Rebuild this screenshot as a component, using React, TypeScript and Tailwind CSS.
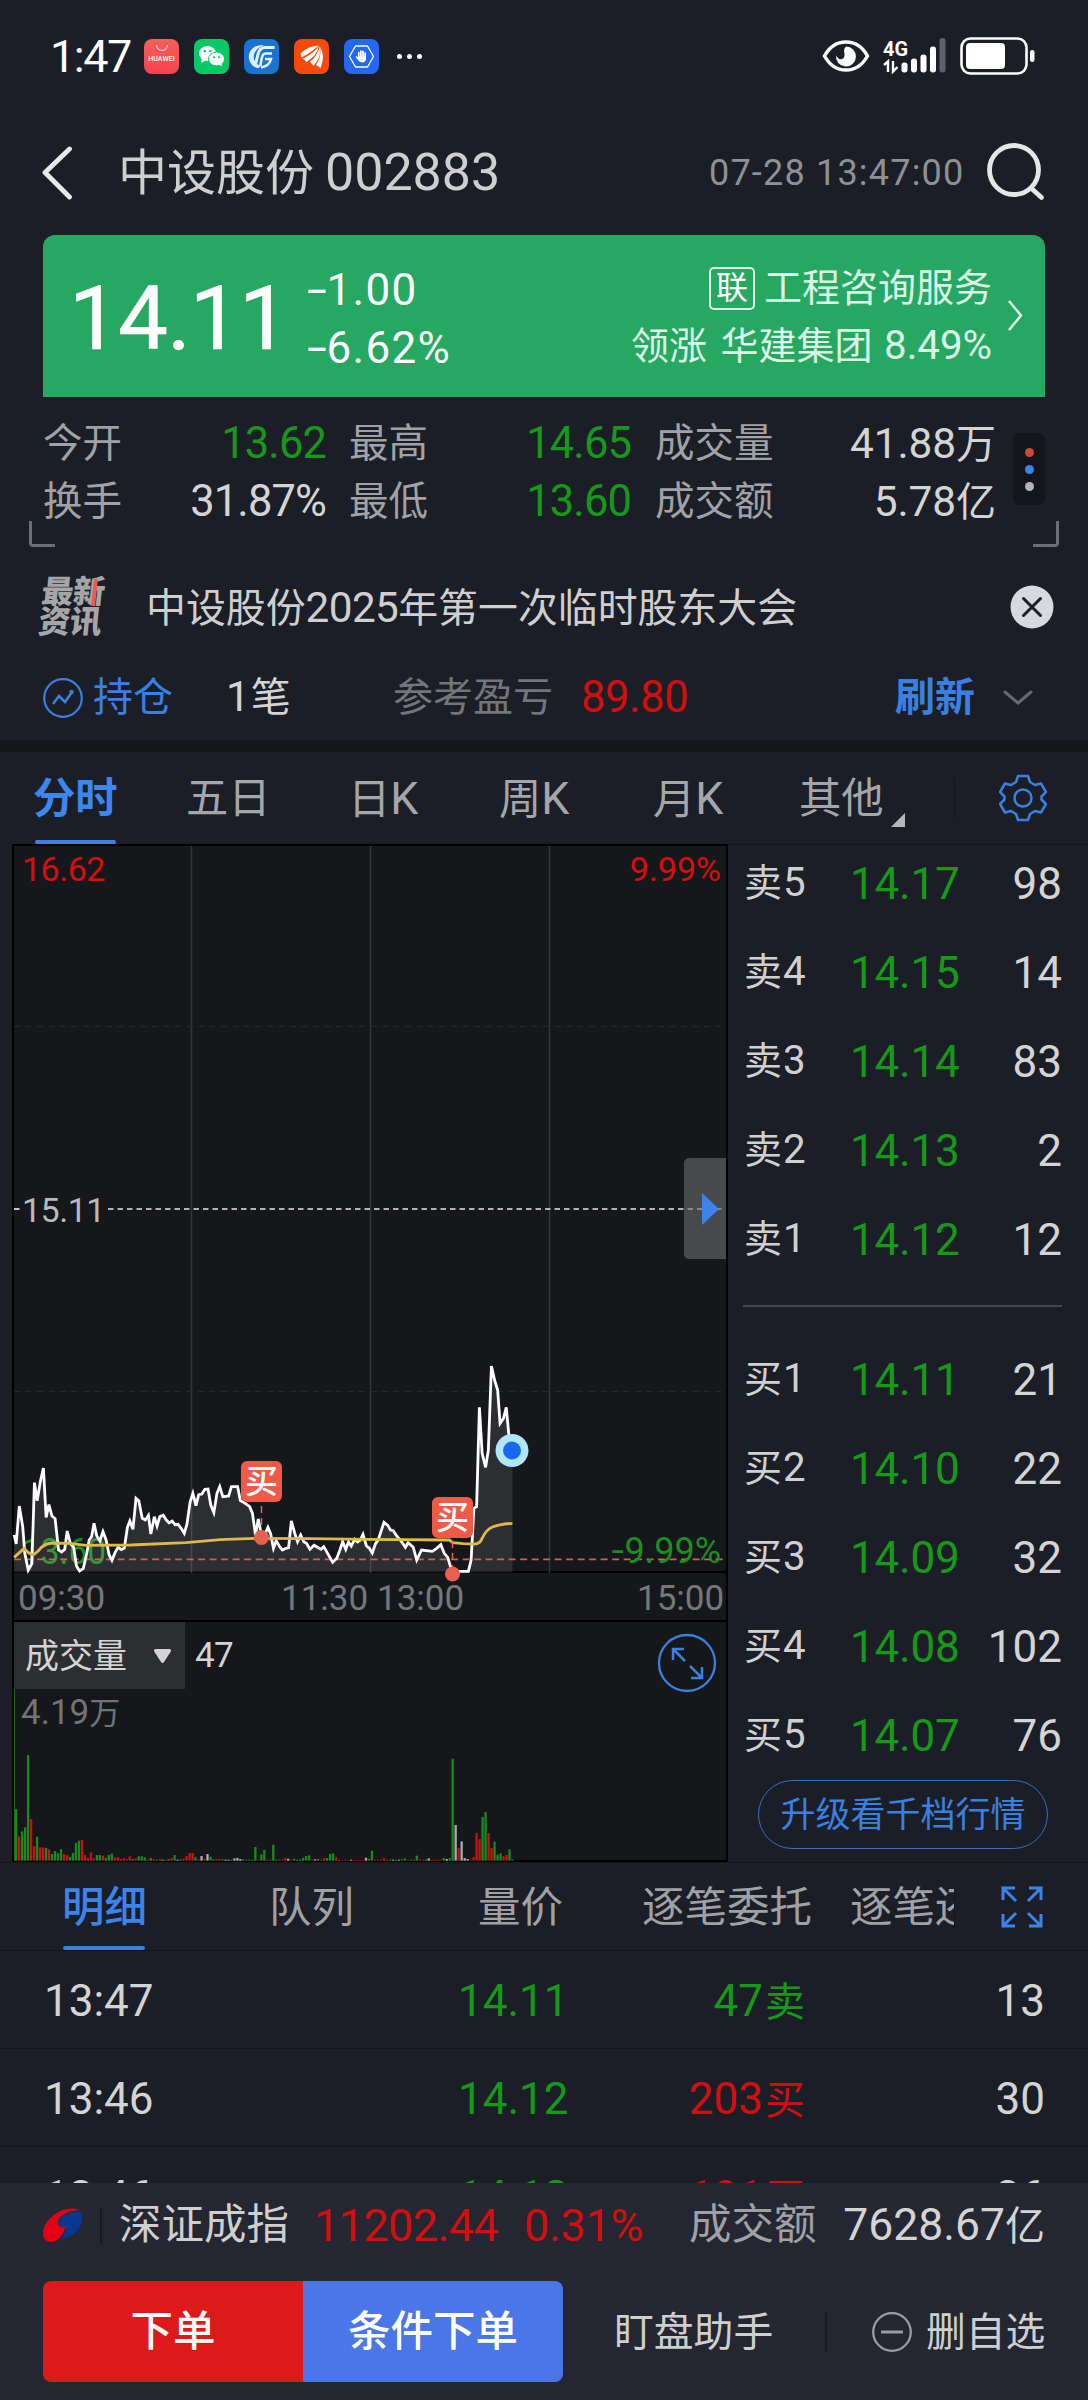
import React from 'react';

const N = ({ children, className = '' }: { children: React.ReactNode; className?: string }) => (
  <span className={`text-[1.06em] ${className}`}>{children}</span>
);

const pricePoints =
  '41,585 47,612 56,498 66,560 72,640 82,690 92,672 96,560 100,428 108,482 117,425 126,384 134,532 142,494 151,528 160,536 170,630 179,636 188,628 195,573 205,612 214,622 222,678 231,693 242,685 252,640 259,600 266,590 273,550 281,588 290,603 299,575 308,600 317,645 325,661 334,638 343,622 352,629 361,624 370,562 377,543 386,568 395,475 403,482 413,535 422,540 431,526 438,582 448,530 456,558 464,530 474,526 483,540 491,548 500,543 508,554 517,553 526,565 535,580 543,552 552,486 560,460 569,497 577,464 586,462 595,448 604,447 612,495 621,518 630,460 638,440 647,470 656,469 664,468 672,440 690,440 698,482 712,490 725,500 733,520 742,585 750,537 760,590 768,585 778,562 786,582 794,625 802,602 812,620 820,630 830,625 838,623 846,543 856,580 864,605 873,585 882,605 890,610 900,628 912,616 922,622 932,628 940,620 950,638 966,667 978,655 987,630 995,605 1004,628 1012,606 1020,618 1030,598 1038,606 1046,600 1054,583 1064,618 1072,624 1081,639 1090,612 1098,600 1115,547 1126,556 1134,570 1142,572 1152,588 1168,608 1177,622 1185,608 1200,622 1210,660 1224,630 1255,634 1268,625 1280,614 1290,640 1300,652 1308,680 1318,694 1360,694 1368,660 1376,505 1384,500 1392,202 1400,340 1410,382 1418,330 1427,78 1436,120 1445,150 1452,250 1462,235 1470,202 1478,290 1488,332';

const averagePath =
  'M41,652 L70,625 Q82,640 94,645 Q106,640 120,622 Q134,610 150,609 L200,610 L250,616 L380,615 L540,608 L640,599 L740,595 L900,596 L1060,598 L1305,600 L1315,608 L1345,611 L1378,612 Q1394,612 1400,595 Q1412,568 1430,561 Q1450,553 1488,550';

// index, colour, height
const bars: [number, string, number][] = [
  [0,'g',155],[1,'r',73],[2,'g',88],[3,'g',100],[4,'g',317],[5,'r',125],[6,'r',44],[7,'g',72],[8,'r',40],[9,'r',40],[10,'g',38],[11,'r',34],[12,'g',20],[13,'g',29],[14,'g',22],[15,'g',35],[16,'r',20],[17,'r',17],[18,'g',11],[19,'g',23],[20,'g',53],[21,'g',60],[22,'r',62],[23,'r',17],[24,'r',9],[25,'r',25],[26,'r',7],[27,'g',17],[28,'g',17],[29,'r',15],[30,'g',8],[31,'g',17],[32,'g',21],[33,'r',10],[34,'r',10],[35,'r',5],[36,'r',8],[37,'r',4],[38,'r',13],[39,'g',5],[40,'r',7],[41,'g',13],[42,'g',13],[43,'g',10],[44,'r',4],[45,'g',8],[46,'r',5],[47,'g',3],[48,'r',5],[49,'w',3],[50,'g',3],[51,'g',5],[52,'r',8],[53,'g',17],[54,'w',3],[55,'g',4],[56,'r',7],[57,'r',14],[58,'r',23],[59,'r',23],[60,'g',10],[61,'r',4],[62,'w',14],[63,'r',6],[64,'w',20],[65,'g',12],[66,'g',4],[67,'r',5],[68,'r',6],[69,'g',4],[70,'w',3],[71,'w',3],[72,'g',3],[73,'w',7],[74,'w',8],[75,'w',5],[76,'g',4],[77,'g',3],[78,'g',3],[79,'g',3],[80,'g',41],[81,'r',3],[82,'g',19],[83,'g',32],[84,'r',3],[85,'g',3],[86,'g',48],[87,'g',3],[88,'g',3],[89,'r',4],[90,'r',8],[91,'w',6],[92,'r',3],[93,'g',6],[94,'g',3],[95,'g',4],[96,'g',9],[97,'g',14],[98,'g',16],[99,'r',3],[100,'w',4],[101,'g',5],[102,'r',3],[103,'r',8],[104,'g',8],[105,'g',20],[106,'g',22],[107,'r',11],[108,'r',3],[109,'r',2],[110,'r',3],[111,'r',2],[112,'w',3],[113,'r',2],[114,'r',3],[115,'r',2],[116,'r',2],[117,'w',9],[118,'g',6],[119,'g',30],[120,'r',3],[121,'r',3],[122,'r',4],[123,'r',8],[124,'r',3],[125,'g',3],[126,'w',3],[127,'g',3],[128,'w',3],[129,'g',4],[130,'g',7],[131,'r',3],[132,'g',3],[133,'g',3],[134,'g',15],[135,'r',4],[136,'r',3],[137,'g',4],[138,'w',7],[139,'r',3],[140,'r',3],[141,'r',3],[142,'r',3],[143,'g',8],[144,'w',5],[145,'g',8],[146,'g',306],[147,'w',107],[148,'r',38],[149,'w',58],[150,'w',8],[151,'w',5],[152,'r',3],[153,'r',11],[154,'r',83],[155,'r',65],[156,'g',131],[157,'g',146],[158,'r',83],[159,'r',38],[160,'g',57],[161,'g',18],[162,'g',22],[163,'r',13],[164,'r',17],[165,'g',34],[166,'g',3],
];
const barFill: Record<string, string> = { g: '#1a8a1e', r: '#c41414', w: '#a9abad' };

function StatusBar() {
  return (
    <div className="flex h-[112px] items-center text-white">
      <div className="w-[144px] shrink-0 pl-[50px] text-[45px] leading-none tracking-[-1.5px] whitespace-nowrap">1:47</div>
      <div className="flex gap-[15px]">
        <div className="flex h-[35px] w-[35px] flex-col items-center rounded-[8px] bg-linear-to-b from-[#f2605a] to-[#f8414e]">
          <svg width="14" height="7" viewBox="0 0 14 7" className="mt-[6px]"><path d="M1.500 0a5.500 5.500 0 0 0 11 0" fill="none" stroke="#ffd3d3" strokeWidth="1.100" /></svg>
          <span className="mt-[3px] text-[7px] leading-[8px] font-medium tracking-[0.100px] whitespace-nowrap">HUAWEI</span>
        </div>
        <svg width="35" height="35" viewBox="0 0 35 35">
          <rect width="35" height="35" rx="8" fill="#07c965" />
          <ellipse cx="13.500" cy="14.500" rx="8.500" ry="7.500" fill="#fff" /><path d="M8 19l-.8 5 4.500-2.500z" fill="#fff" />
          <ellipse cx="22.500" cy="20" rx="8" ry="6.900" fill="#fff" stroke="#07c965" strokeWidth="1" /><path d="M25 25l2.800 2.600-.3-4z" fill="#fff" />
          <g fill="#07c160"><circle cx="10.800" cy="12" r="1.200" /><circle cx="16.500" cy="12" r="1.200" /><circle cx="20" cy="18.200" r="1" /><circle cx="25" cy="18.200" r="1" /></g>
        </svg>
        <svg width="35" height="35" viewBox="0 0 35 35">
          <rect width="35" height="35" rx="8" fill="#1a73d0" />
          <path d="M20 6C8 5 2 15 6 23c2 4 5 6 9 6l1-2.500C8 24 6 12 20 6z" fill="#dcecff" />
          <g fill="none" stroke="#e6f1ff"><path d="M30.500 8.500H21c-4.500 0-6 2.500-7 7l-2.500 9.500" strokeWidth="3" /><path d="M28 14.500h-6.500c-2.500 0-3.200 2-3.800 5l-1.500 8" strokeWidth="2.600" /><path d="M21 20h6c-1 4-4 7.500-10 8.500" strokeWidth="2.600" /></g>
        </svg>
        <svg width="35" height="35" viewBox="0 0 35 35">
          <rect width="35" height="35" rx="8" fill="#f54a0a" />
          <g fill="#fff"><path d="M6.500 14.500Q14 7 24.500 6.500 18 13 7.500 18.500z" /><path d="M9 19.500Q19 15 25 7q-1.500 9-12.500 16z" /><path d="M16 22.500Q23.500 17 25.800 7.500 28 18 19.500 27z" /><path d="M22 26q5.500-7 4.300-18Q31.500 17 26.500 29z" /></g>
        </svg>
        <svg width="35" height="35" viewBox="0 0 35 35">
          <rect width="35" height="35" rx="8" fill="#2467f4" />
          <path d="M11.500 7h12l6 10.500-6 10.500h-12l-6-10.500z" fill="none" stroke="#fff" strokeWidth="1.300" strokeLinejoin="round" />
          <g stroke="#fff" strokeWidth="1.700" strokeLinecap="round"><path d="M14.800 13.500v5M16.900 12v6M19 12.300v6M21.100 14v5M12.500 18l3 3.500" /></g><path d="M14 17.500h8v3q-.8 3-3.600 3t-3.900-3z" fill="#fff" />
        </svg>
      </div>
      <div className="ml-[18px] flex gap-[5px]">
        {[0, 1, 2].map(i => <i key={i} className="h-[5px] w-[5px] rounded-full bg-white" />)}
      </div>
      <svg className="ml-auto" width="48" height="36" viewBox="0 0 48 36">
        <path d="M2.500 18C8 8 15 4 24 4S40 8 45.500 18C40 28 33 32 24 32S8 28 2.500 18z" fill="none" stroke="#fff" strokeWidth="3.400" />
        <path d="M24 8.500a10 10 0 1 1-10 9c2 4 6 5 8 2 2-4-2-7 2-11z" fill="#fff" />
      </svg>
      <svg className="ml-[13px]" width="65" height="38" viewBox="0 0 65 38">
        <text x="0" y="18.500" fill="#fff" fontSize="20" fontWeight="700" textLength="25" lengthAdjust="spacingAndGlyphs">4G</text>
        <path d="M1 28l4-3.500v10.500M10 24v10.500l4.500-4.500" fill="none" stroke="#fff" strokeWidth="2.400" />
        <g fill="#fff"><rect x="18.500" y="25.500" width="6" height="10" rx="2.700" /><rect x="28" y="21.500" width="6" height="14" rx="2.700" /><rect x="37.500" y="17.500" width="6" height="18" rx="2.700" /><rect x="47" y="9.500" width="6" height="26" rx="2.700" /><rect x="56.500" y="1" width="6" height="34.500" rx="2.700" opacity=".3" /></g>
      </svg>
      <svg className="mr-[52px] ml-[12px]" width="76" height="38" viewBox="0 0 76 38">
        <rect x="1.500" y="1.500" width="65" height="35" rx="9" fill="none" stroke="#fff" strokeWidth="2.600" />
        <rect x="6" y="6" width="39" height="26" rx="4" fill="#fff" />
        <rect x="70" y="13" width="4.500" height="12" rx="2.200" fill="#fff" />
      </svg>
    </div>
  );
}

function Header() {
  return (
    <div className="flex h-[123px] items-center">
      <svg className="-mt-[2px] ml-[41px]" width="34" height="54" viewBox="0 0 34 54"><path d="M28.500 3L4 26.500l24.500 24.500" fill="none" stroke="#e9e9ea" strokeWidth="4.800" strokeLinecap="round" strokeLinejoin="round" /></svg>
      <div className="-mt-[1px] ml-[43px] w-[591px] text-[49px] leading-none whitespace-nowrap text-[#cfcfd0]">中设股份<N className="ml-[11px]">002883</N></div>
      <div className="-mt-[1px] w-[275px] text-[36px] leading-none tracking-[1.200px] whitespace-nowrap text-[#8f9095]">07-28 13:47:00</div>
      <svg className="-mt-[2px]" width="62" height="62" viewBox="0 0 62 62"><circle cx="30" cy="28" r="24.500" fill="none" stroke="#e6e6e7" strokeWidth="4.800" /><path d="M47 46l10.500 9.500" stroke="#e6e6e7" strokeWidth="4.800" strokeLinecap="round" /></svg>
    </div>
  );
}

function Banner() {
  return (
    <div className="mx-[43px] flex h-[162px] rounded-t-[12px] bg-[#26a862] text-white">
      <div className="w-[264px] pl-[26px] text-[89px] leading-[168px] tracking-[-0.900px] [-webkit-text-stroke:0.600px_white]">14.11</div>
      <div className="w-[180px] pt-[26px] text-[44px] leading-[58px] tracking-[1.300px] whitespace-nowrap">
        <div><span className="mr-[6px] inline-block origin-left scale-x-165">-</span>1.00</div>
        <div><span className="mr-[6px] inline-block origin-left scale-x-165">-</span>6.62%</div>
      </div>
      <div className="ml-auto flex flex-col items-end pt-[24px] text-[38px] leading-[58px] whitespace-nowrap text-[#dcf8e7]">
        <div className="flex items-center"><span className="mr-[9px] flex h-[43px] w-[46px] items-center justify-center rounded-[5px] border-2 border-[#dcf8e7] text-[32px] leading-none text-white">联</span>工程咨询服务</div>
        <div>领涨<span className="ml-[4px]"> </span>华建集团<span className="ml-[2px]"> </span><N>8.49%</N></div>
      </div>
      <svg className="mt-[64px] mr-[22px] ml-[15px]" width="16" height="33" viewBox="0 0 16 33"><path d="M2 2l12 14.500L2 31" fill="none" stroke="#e4f8ec" strokeWidth="2.500" /></svg>
    </div>
  );
}

const stats = [
  ['今开', '13.62', 'g', '最高', '14.65', '成交量', '41.88', '万'],
  ['换手', '31.87%', 'w', '最低', '13.60', '成交额', '5.78', '亿'],
];

function Stats() {
  return (
    <div className="relative h-[160px] pt-[18px] text-[39.500px] whitespace-nowrap text-[#a1a2a5]">
      {stats.map(s => (
        <div key={s[0]} className="flex h-[58px] items-center pl-[43px] leading-none">
          <span className="w-[100px]">{s[0]}</span>
          <span className={`w-[183px] text-right text-[43.500px] tracking-[-0.900px] ${s[2] === 'g' ? 'text-[#159a18]' : 'text-[#d4d4d4]'}`}>{s[1]}</span>
          <span className="ml-[23px] w-[120px]">{s[3]}</span>
          <span className="w-[162px] text-right text-[43.500px] tracking-[-0.900px] text-[#159a18]">{s[4]}</span>
          <span className="ml-[24px] w-[130px]">{s[5]}</span>
          <span className="w-[211px] text-right text-[40px] text-[#d4d4d4]"><N className="tracking-[-0.100px]">{s[6]}</N>{s[7]}</span>
        </div>
      ))}
      <div className="absolute top-[36px] left-[1013px] flex h-[72px] w-[32px] flex-col items-center justify-center gap-[8px] rounded-[7px] bg-[#14151a]">
        <i className="h-[9px] w-[9px] rounded-full bg-[#cf4835]" /><i className="h-[9px] w-[9px] rounded-full bg-[#3b83e6]" /><i className="h-[9px] w-[9px] rounded-full bg-[#b4b4b6]" />
      </div>
      <div className="absolute top-[124px] left-[29px] h-[26px] w-[26px] rounded-bl-[4px] border-b-[3px] border-l-[3px] border-[#6c6e75]" />
      <div className="absolute top-[124px] right-[29px] h-[26px] w-[26px] rounded-br-[4px] border-r-[3px] border-b-[3px] border-[#6c6e75]" />
    </div>
  );
}

function News() {
  return (
    <div className="flex h-[100px] items-center whitespace-nowrap">
      <div className="relative ml-[40px] w-[106px] -skew-x-6 text-[32px] leading-[30px] font-black tracking-[-0.500px] text-[#a6a6a8]">
        <div>最新</div><div>资讯</div>
        <i className="absolute top-[2px] left-[51px] h-[27px] w-[4px] bg-[#ee5a49]" />
      </div>
      <div className="mt-[2px] w-[864px] text-[39.900px] leading-none text-[#cfcfd0]">中设股份<N className="tracking-[-0.600px]">2025</N>年第一次临时股东大会</div>
      <svg width="44" height="44" viewBox="0 0 44 44"><circle cx="22" cy="22" r="21.500" fill="#d8d9de" /><path d="M13.500 13.500l17 17m0-17l-17 17" stroke="#1b1e27" strokeWidth="3" strokeLinecap="round" /></svg>
    </div>
  );
}

function Position() {
  return (
    <div className="flex h-[83px] items-center pb-[2px] pl-[43px] text-[40px] leading-none whitespace-nowrap">
      <svg width="50" height="40" viewBox="0 0 50 40"><circle cx="20" cy="20" r="18.800" fill="none" stroke="#3a80e0" strokeWidth="2.200" /><path d="M10 26l6-8 6 6 7-10" fill="none" stroke="#3a80e0" strokeWidth="2.500" /><circle cx="28.500" cy="14" r="2.200" fill="#3a80e0" /></svg>
      <span className="w-[133px] text-[#3a80e0]">持仓</span>
      <span className="w-[167px] text-[#d4d4d4]"><N>1</N><span className="ml-px">笔</span></span>
      <span className="w-[188px] text-[#737579]">参考盈亏</span>
      <span className="w-[314px] text-[43.500px] tracking-[-0.400px] text-[#d40e0e]">89.80</span>
      <span className="w-[108px] font-bold text-[#3a80e0]">刷新</span>
      <svg width="30" height="15" viewBox="0 0 30 15"><path d="M2 2l13 11L28 2" fill="none" stroke="#66686d" strokeWidth="3" strokeLinecap="round" /></svg>
    </div>
  );
}

function ChartTabs() {
  return (
    <div className="flex h-[92px] items-center text-[42.300px] leading-none whitespace-nowrap text-[#a5a6a9]">
      <span className="relative flex h-full w-[153px] items-center pt-[2px] pl-[33px] font-bold text-[#3c86ee]">分时<i className="absolute bottom-0 left-[35px] h-[4px] w-[81px] rounded-full bg-[#3c7fe0]" /></span>
      <span className="w-[163px] pt-[2px] pl-[33px]">五日</span>
      <span className="w-[152px] pt-[2px] pl-[32px]">日<N>K</N></span>
      <span className="w-[153px] pt-[2px] pl-[31px]">周<N>K</N></span>
      <span className="w-[178px] pt-[2px] pl-[32px]">月<N>K</N></span>
      <span className="w-[92px] pt-[2px]">其他</span>
      <svg width="14" height="14" viewBox="0 0 14 14" className="mt-[44px]"><path d="M14 0v14H0z" fill="#b4b5b7" /></svg>
      <i className="ml-[49px] h-[42px] w-px bg-[#14161b]" />
      <svg className="ml-[44px]" width="48" height="48" viewBox="0 0 48 48" fill="none" stroke="#3a80e0" strokeWidth="2.500" strokeLinejoin="round">
        <path d="M19 2h10l2 6 5 3 6-1.500 5 8.500-4.500 4.500v3L47 30l-5 8.500-6-1.500-5 3-2 6H19l-2-6-5-3-6 1.500L1 30l4.500-4.500v-3L1 18l5-8.500 6 1.500 5-3z" /><circle cx="24" cy="24" r="8.500" />
      </svg>
    </div>
  );
}

function BuyMark({ className }: { className: string }) {
  return <div className={`absolute flex h-[41px] w-[41px] items-center justify-center rounded-[6px] bg-[#f05a47] text-[33px] leading-none font-medium text-white ${className}`}>买</div>;
}

function Chart() {
  return (
    <div className="ml-[12px] w-[716px] border-2 border-black bg-[#15171b]">
      <div className="relative h-[727px] border-b-2 border-black text-[34px] leading-none">
        <svg className="absolute inset-0 overflow-visible" width="712" height="727" viewBox="14 846 712 727">
          <path d="M191.500 846v727M370.500 846v727M549.500 846v727" stroke="#33343d" strokeWidth="1.500" />
          <path d="M14 1026.500h712M14 1391.500h712" stroke="#25272c" strokeWidth="1.200" strokeDasharray="6 5.500" />
          <text x="22" y="1564" fill="#1a8f1e" fontSize="37" textLength="84" lengthAdjust="spacingAndGlyphs">13.60</text>
          <g transform="translate(0 1340) scale(.34439 .33333)">
            <polygon points={`41,697 ${pricePoints} 1488,697`} fill="#ffffff" fillOpacity=".1" />
            <path d="M41 658H2110" stroke="#d65d4b" strokeWidth="1.800" strokeDasharray="7 4.500" vectorEffect="non-scaling-stroke" />
            <polyline points={pricePoints} fill="none" stroke="#fff" strokeWidth="2.800" vectorEffect="non-scaling-stroke" />
            <path d={averagePath} fill="none" stroke="#dfb94b" strokeWidth="2.900" vectorEffect="non-scaling-stroke" />
          </g>
          <path d="M261.500 1506v25M452.500 1541v30" stroke="#e86350" strokeWidth="1.500" strokeDasharray="7 5" />
          <circle cx="261.500" cy="1537.500" r="7.500" fill="#e8604e" /><circle cx="452.500" cy="1574" r="7.500" fill="#e8604e" />
          <path d="M108 1209H724" stroke="#e6e6e6" strokeWidth="1.700" strokeDasharray="5.500 4" />
          <path d="M14 1209h9" stroke="#e6e6e6" strokeWidth="1.700" strokeDasharray="5.500 4" />
          <circle cx="512" cy="1450.500" r="16.500" fill="#aee6fb" /><circle cx="512" cy="1450.500" r="9" fill="#1769f0" />
        </svg>
        <div className="absolute top-[6px] left-[8px] tracking-[-0.500px] text-[#d80d0d]">16.62</div>
        <div className="absolute top-[6px] right-[5px] text-[#d80d0d]">9.99%</div>
        <div className="absolute top-[347px] left-[8px] tracking-[-0.500px] text-[#b9babb]">15.11</div>
        <div className="absolute right-[5px] bottom-[2px] flex text-[36px] text-[#1a8f1e]"><span className="origin-right scale-x-125">-</span>9.99%</div>
        <BuyMark className="top-[615px] left-[227px]" />
        <BuyMark className="top-[651px] left-[418px]" />
        <div className="absolute top-[312px] right-0 flex h-[101px] w-[42px] items-center justify-center rounded-l-[5px] bg-[#6b6b6d]/60">
          <svg className="ml-[10px]" width="17" height="32" viewBox="0 0 17 32"><path d="M0 0l17 16L0 32z" fill="#3c83ee" /></svg>
        </div>
      </div>
      <div className="flex h-[47px] items-center pt-[4px] text-[35px] leading-none text-[#76777b]">
        <span className="ml-[4px] w-[263px]">09:30</span><span className="w-[96px]">11:30</span><span className="w-[260px]">13:00</span><span>15:00</span>
      </div>
      <div className="relative h-[240px] border-t-2 border-black">
        <div className="flex">
          <div className="flex h-[67px] w-[171px] items-center bg-[#2d2e32] pl-[11px] text-[34px] leading-none text-[#d4d4d4]">成交量
            <svg className="ml-[26px]" width="19" height="16" viewBox="0 0 19 16"><path d="M3 1h13q3 0 1.500 3L11 14q-1.500 2-3 0L1.500 4Q0 1 3 1z" fill="#d4d4d4" /></svg>
          </div>
          <div className="pl-[10px] text-[35px] leading-[67px] tracking-[-0.700px] text-[#d4d4d4]">47</div>
        </div>
        <div className="pt-[6px] pl-[7px] text-[31px] leading-[36px] text-[#727377]"><span className="text-[35px]">4.19</span>万</div>
        <svg className="absolute inset-0" width="712" height="239" viewBox="14 1622 712 239">
          <path d="M14.500 1689v172" stroke="#19651c" />
          {bars.map(([i, c, h]) => <rect key={i} x={15 + i * 2.99} y={1860.7 - h / 3} width="2.300" height={h / 3} fill={barFill[c]} />)}
          <circle cx="687" cy="1663" r="28" fill="none" stroke="#3a80e0" strokeWidth="2.300" />
          <path d="M685 1661l-12-12m0 11v-11h11M690 1666l12 12m0-11v11h-11" fill="none" stroke="#3a80e0" strokeWidth="2.500" />
        </svg>
      </div>
    </div>
  );
}

function BookRow({ label, n, price, qty }: { label: string; n: number; price: string; qty: string }) {
  return (
    <div className="flex h-[89px] items-center leading-none whitespace-nowrap">
      <span className="w-[106px] text-[38px] text-[#d0d0d1]">{label}<N className="ml-[1px]">{n}</N></span>
      <span className="text-[44px] tracking-[-0.200px] text-[#159a18]">{price}</span>
      <span className="ml-auto text-[44px] text-[#d4d4d4]">{qty}</span>
    </div>
  );
}

function OrderBook() {
  const sells = [['14.17', '98'], ['14.15', '14'], ['14.14', '83'], ['14.13', '2'], ['14.12', '12']];
  const buys = [['14.11', '21'], ['14.10', '22'], ['14.09', '32'], ['14.08', '102'], ['14.07', '76']];
  return (
    <div className="flex w-[360px] flex-col border-t border-[#14161b] pr-[26px] pl-[16px]">
      <div className="-mt-[6px]">{sells.map((r, i) => <BookRow key={i} label="卖" n={5 - i} price={r[0]} qty={r[1]} />)}</div>
      <div className="mt-[21px] mb-[28px] -ml-px h-[2px] shrink-0 bg-[#43454f]" />
      <div>{buys.map((r, i) => <BookRow key={i} label="买" n={i + 1} price={r[0]} qty={r[1]} />)}</div>
      <div className="ml-[14px] flex h-[69px] w-[290px] shrink-0 items-center justify-center rounded-full border border-[#3a70c0] pt-[2px] text-[35px] leading-none text-[#3a80e0]">升级看千档行情</div>
    </div>
  );
}

function DetailTabs() {
  return (
    <div className="flex h-[89px] items-center border-y border-[#14161b] text-[42.500px] leading-none whitespace-nowrap text-[#a0a1a4]">
      <span className="relative flex h-full w-[207px] items-center pt-[3px] pl-[62px] font-medium text-[#3c83ea]">明细<i className="absolute bottom-0 left-[63px] h-[4px] w-[82px] rounded-full bg-[#3c7fe0]" /></span>
      <span className="w-[208px] pt-[3px] pl-[62px]">队列</span>
      <span className="w-[227px] pt-[3px] pl-[63px]">量价</span>
      <span className="w-[208px] pt-[3px]">逐笔委托</span>
      <span className="w-[104px] overflow-hidden pt-[11px] pb-2">逐笔还</span>
      <i className="h-[42px] w-px bg-[#14161b]" />
      <svg className="ml-[46px]" width="42" height="42" viewBox="0 0 42 42" fill="none" stroke="#3c83ea" strokeWidth="3"><path d="M15 15L2 2m0 12V2h12M27 15L40 2M28 2h12v12M15 27L2 40m0-12v12h12M27 27l13 13M28 40h12V28" /></svg>
    </div>
  );
}

const trades = [
  ['13:47', '14.11', '47', '卖', '13'],
  ['13:46', '14.12', '203', '买', '30'],
  ['13:46', '14.12', '191', '买', '36'],
];

function Trades() {
  return (
    <div className="h-[232px] overflow-hidden">
      {trades.map((t, i) => (
        <div key={i} className="flex h-[98px] items-center border-b border-[#14161b] pt-[3px] pr-[43px] pl-[44px] text-[44px] leading-none text-[#d4d4d4]">
          <span className="w-[414px]">{t[0]}</span>
          <span className="w-[130px] text-[#159a18]">{t[1]}</span>
          <span className={`w-[217px] text-right ${t[3] === '卖' ? 'text-[#159a18]' : 'text-[#d40e0e]'}`}>{t[2]}<span className="ml-[2px] text-[40px]">{t[3]}</span></span>
          <span className="ml-auto">{t[4]}</span>
        </div>
      ))}
    </div>
  );
}

function Footer() {
  return (
    <div className="h-[217px] bg-[#242631] whitespace-nowrap">
      <div className="flex h-[82px] items-center pt-[2px] pl-[43px] text-[42px] leading-none">
        <svg width="40" height="36" viewBox="0 0 40 36"><path d="M36 3C22-3 0 11 0 27c0 8 8 10 14 6 6-4 7-10 9-13-4 1-9-1-8-6 1-5 10-10 21-11z" fill="#e60014" /><path d="M37 4c4 6 3 20-12 26-3 1-6 2-10 2 6-3 8-8 8-12-5 1-8-2-8-5 1-5 9-10 22-11z" fill="#07388c" /></svg>
        <i className="ml-[17px] h-[35px] w-[2px] bg-[#181a20]" />
        <span className="ml-[17px] w-[195px] text-[42.500px] text-[#cfcfd0]">深证成指</span>
        <span className="w-[210px] text-[45px] tracking-[-0.600px] text-[#d40e0e]">11202.44</span>
        <span className="w-[165px] text-[45px] tracking-[-0.300px] text-[#d40e0e]">0.31%</span>
        <span className="text-[42.500px] text-[#a0a1a4]">成交额</span>
        <span className="mr-[43px] ml-auto text-[40px] text-[#d4d4d4]"><span className="text-[44.500px]">7628.67</span>亿</span>
      </div>
      <div className="mt-[16px] flex h-[101px] items-center pl-[43px]">
        <div className="flex h-full w-[520px] overflow-hidden rounded-[8px] text-[42.500px] font-medium text-white">
          <button className="flex-1 bg-[#dc1a1a] pt-px">下单</button><button className="flex-1 bg-[#4a76e8] pt-px">条件下单</button>
        </div>
        <span className="mt-[3px] ml-[51px] w-[211px] text-[39.800px] leading-none text-[#cfcfd0]">盯盘助手</span>
        <i className="h-[40px] w-[2px] bg-[#171920]" />
        <svg className="ml-[45px]" width="40" height="40" viewBox="0 0 40 40" fill="none" stroke="#9b9ca0" strokeWidth="2.300"><circle cx="20" cy="20" r="18.800" /><path d="M9 20h22" strokeWidth="3" /></svg>
        <span className="mt-[3px] ml-[14px] text-[39.800px] leading-none text-[#cfcfd0]">删自选</span>
      </div>
    </div>
  );
}

export default function App() {
  return (
    <div className="h-[2400px] w-[1088px] overflow-hidden bg-[#1b1e27] font-['Roboto','Noto_Sans_CJK_SC',sans-serif]">
      <StatusBar />
      <Header />
      <Banner />
      <Stats />
      <News />
      <Position />
      <div className="h-[12px] bg-[#15171b]" />
      <ChartTabs />
      <div className="flex h-[1018px]"><Chart /><OrderBook /></div>
      <DetailTabs />
      <Trades />
      <Footer />
    </div>
  );
}
